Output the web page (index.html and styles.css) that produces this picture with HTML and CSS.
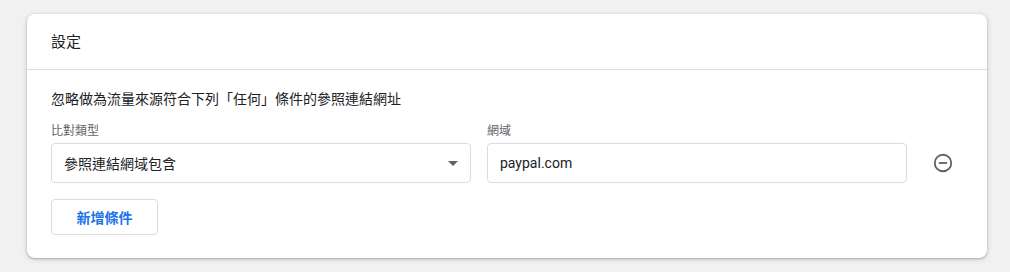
FILE: index.html
```html
<!DOCTYPE html>
<html lang="zh-Hant">
<head>
<meta charset="utf-8">
<link rel="stylesheet" href="styles.css">
</head>
<body>
<div class="page">
  <section class="card">
    <header class="card-header">設定</header>
    <div class="card-body">
      <p class="desc">忽略做為流量來源符合下列「任何」條件的參照連結網址</p>
      <div class="row">
        <div class="field">
          <label class="label">比對類型</label>
          <div class="box select">
            <span>參照連結網域包含</span>
            <span class="caret"></span>
          </div>
        </div>
        <div class="field">
          <label class="label">網域</label>
          <div class="box input"><span>paypal.com</span></div>
        </div>
        <div class="remove">
          <svg width="22" height="22" viewBox="0 0 24 24"><circle cx="12" cy="12" r="9" fill="none" stroke="#5f6368" stroke-width="2"/><path d="M7.5 12h9" stroke="#5f6368" stroke-width="2"/></svg>
        </div>
      </div>
      <button class="add">新增條件</button>
    </div>
  </section>
</div>
</body>
</html>
```
FILE: styles.css
```css
* { box-sizing: border-box; }
html, body { margin: 0; padding: 0; }
body {
  background: #f1f1f1;
  font-family: Roboto, "Noto Sans CJK TC", sans-serif;
  color: #202124;
  width: 1010px;
  height: 272px;
  overflow: hidden;
}
.page { padding: 14px 0 0 27px; }
.card {
  width: 960px;
  height: 244px;
  background: #fff;
  border-radius: 8px;
  box-shadow: 0 1px 2px rgba(60,64,67,0.3), 0 1px 4px 1px rgba(60,64,67,0.15);
}
.card-header {
  height: 56px;
  padding: 0 24px 2px;
  display: flex;
  align-items: center;
  font-size: 15px;
  border-bottom: 1px solid #dadce0;
}
.card-body { padding: 19px 24px 0; }
.desc { margin: 0; font-size: 14px; line-height: 20px; }
.row { display: flex; align-items: flex-end; margin-top: 14px; }
.field { width: 420px; display: flex; flex-direction: column; }
.field + .field { margin-left: 16px; }
.label { font-size: 12px; color: #5f6368; line-height: 16px; margin-bottom: 4px; }
.box {
  height: 40px;
  border: 1px solid #dadce0;
  border-radius: 4px;
  display: flex;
  align-items: center;
  padding: 0 12px;
  font-size: 14px;
  color: #202124;
}
.select { justify-content: space-between; padding-right: 12px; }
.caret {
  width: 0; height: 0;
  border-left: 5px solid transparent;
  border-right: 5px solid transparent;
  border-top: 5px solid #5f6368;
}
.remove { width: 22px; height: 40px; display: flex; align-items: center; margin-left: 25px; }
.remove svg { display: block; }
.add {
  margin-top: 16px;
  height: 36px;
  width: 107px;
  background: #fff;
  border: 1px solid #dadce0;
  border-radius: 4px;
  color: #1a73e8;
  font-family: Roboto, "Noto Sans CJK TC", sans-serif;
  font-size: 14px;
  font-weight: 700;
  padding: 0;
}
```
